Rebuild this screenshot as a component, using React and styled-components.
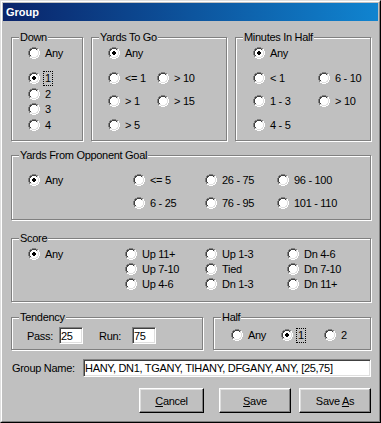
import React from 'react';
import styled, { createGlobalStyle } from 'styled-components';

const GlobalStyle = createGlobalStyle`
  html, body { margin: 0; padding: 0; background: #c0c0c0; }
  body { font-family: "Liberation Sans", Arial, sans-serif; font-size: 11px; color: #000; }
  * { box-sizing: border-box; }
`;

const Window = styled.div`
  width: 381px;
  height: 423px;
  border: 1px solid;
  border-color: #dfdfdf #000 #000 #dfdfdf;
  background: #c0c0c0;
`;

const Frame = styled.div`
  height: 100%;
  border: 1px solid;
  border-color: #fff #808080 #808080 #fff;
  padding: 1px;
  display: flex;
  flex-direction: column;
`;

const TitleBar = styled.div`
  flex: none;
  height: 18px;
  padding-left: 3px;
  display: flex;
  align-items: center;
  background: linear-gradient(to right, #0a246a, #1084d0);
  color: #fff;
  font-weight: bold;
  font-size: 11px;
`;

const Client = styled.div`
  flex: 1;
  padding: 10px 7px 0 8px;
  display: flex;
  flex-direction: column;
  letter-spacing: -0.3px;
`;

const Row = styled.div`
  display: grid;
  grid-template-columns: ${p => p.$cols};
  column-gap: ${p => p.$gap}px;
  margin-top: ${p => p.$mt || 0}px;
`;

const GroupBox = styled.fieldset`
  margin: 0;
  margin-top: ${p => p.$mt || 0}px;
  padding: 0;
  min-width: 0;
  height: ${p => p.$h}px;
  border: 1px solid #808080;
  box-shadow: 1px 1px 0 #fff, inset 1px 1px 0 #fff;
`;

const Legend = styled.legend`
  margin-left: 7px;
  padding: 0 1px;
  line-height: 13px;
  font-size: 11px;
  background: #c0c0c0;
`;

const Options = styled.div`
  display: grid;
  grid-template-columns: ${p => p.$cols};
  grid-template-rows: ${p => p.$rows};
  align-items: start;
  padding: ${p => p.$pad};
`;

const Option = styled.div`
  display: flex;
  align-items: center;
  height: 16px;
  white-space: nowrap;
`;

const OptionLabel = styled.span`
  margin-left: 3px;
  padding: 0 1px;
  line-height: 13px;
  border: 1px ${p => (p.$focused ? 'dotted #000' : 'solid transparent')};
`;

const RadioSvg = styled.svg`
  flex: none;
  display: block;
  shape-rendering: crispEdges;
`;

const Inline = styled.div`
  display: flex;
  align-items: center;
  padding: ${p => p.$pad};
`;

const FieldLabel = styled.span`
  flex: none;
  width: ${p => p.$w}px;
  padding-left: ${p => p.$pl || 0}px;
  margin-left: ${p => p.$ml || 0}px;
  white-space: nowrap;
`;

const TextBox = styled.input`
  flex: ${p => (p.$w ? 'none' : '1')};
  width: ${p => (p.$w ? `${p.$w}px` : 'auto')};
  min-width: 0;
  height: ${p => p.$h}px;
  margin: 0;
  padding: 0 1px;
  font: inherit;
  letter-spacing: inherit;
  color: #000;
  background: #fff;
  border: 1px solid;
  border-color: #808080 #fff #fff #808080;
  box-shadow: inset 1px 1px 0 #404040, inset -1px -1px 0 #dfdfdf;
  outline: none;
`;

const NameRow = styled.div`
  display: flex;
  align-items: center;
  margin-top: 9px;
`;

const ButtonRow = styled.div`
  display: flex;
  justify-content: flex-end;
  margin-top: 11px;
`;

const Button = styled.button`
  flex: none;
  width: ${p => p.$w}px;
  height: 25px;
  margin: 0 0 0 ${p => p.$ml || 0}px;
  padding: 0;
  font: inherit;
  letter-spacing: inherit;
  color: #000;
  background: #c0c0c0;
  border: 1px solid;
  border-color: #fff #000 #000 #fff;
  box-shadow: inset -1px -1px 0 #808080, inset 1px 1px 0 #dfdfdf;
`;

/* classic 12x12 radio bitmap */
const OUTER = [[4,5,6,7],[2,3,8,9],[1,10],[1,10],[0,11],[0,11],[0,11],[0,11],[1,10],[1,10],[2,3,8,9],[4,5,6,7]];
const INNER = [[],[4,5,6,7],[2,3,8,9],[2,9],[1,10],[1,10],[1,10],[1,10],[2,9],[2,3,8,9],[4,5,6,7],[]];
const FILL = [null,null,[4,7],[3,8],[2,9],[2,9],[2,9],[2,9],[3,8],[4,7],null,null];
const DOT = [null,null,null,null,[5,6],[4,7],[4,7],[5,6],null,null,null,null];

const Radio = ({ checked }) => {
  const px = [];
  OUTER.forEach((cols, y) => cols.forEach(x => px.push([x, y, x + y < 11 ? '#808080' : '#fff'])));
  INNER.forEach((cols, y) => cols.forEach(x => px.push([x, y, x + y < 11 ? '#404040' : '#dfdfdf'])));
  FILL.forEach((r, y) => {
    if (r) for (let x = r[0]; x <= r[1]; x++) px.push([x, y, '#fff']);
  });
  if (checked) DOT.forEach((r, y) => {
    if (r) for (let x = r[0]; x <= r[1]; x++) px.push([x, y, '#000']);
  });
  return (
    <RadioSvg width="12" height="12" viewBox="0 0 12 12">
      {px.map(([x, y, c], i) => <rect key={i} x={x} y={y} width="1" height="1" fill={c} />)}
    </RadioSvg>
  );
};

const RadioItem = ({ label, checked, focused }) => (
  <Option>
    <Radio checked={checked} />
    <OptionLabel $focused={focused}>{label}</OptionLabel>
  </Option>
);

const renderItems = items =>
  items.map((it, i) =>
    it ? <RadioItem key={i} label={it.l} checked={it.c} focused={it.f} /> : <span key={i} />
  );

const o = (l, c, f) => ({ l, c, f });

export default function App() {
  return (
    <>
      <GlobalStyle />
      <Window>
        <Frame>
          <TitleBar>Group</TitleBar>
          <Client>
            <Row $cols="72px 136px 1fr" $gap={8}>
              <GroupBox $h={110}>
                <Legend>Down</Legend>
                <Options $cols="auto" $rows="25px 16px 15px 16px 16px" $pad="1px 0 0 16px">
                  {renderItems([o('Any'), o('1', true, true), o('2'), o('3'), o('4')])}
                </Options>
              </GroupBox>
              <GroupBox $h={110}>
                <Legend>Yards To Go</Legend>
                <Options $cols="49px auto" $rows="25px 23px 24px 16px" $pad="1px 0 0 16px">
                  {renderItems([o('Any', true), null, o('<= 1'), o('> 10'), o('> 1'), o('> 15'), o('> 5'), null])}
                </Options>
              </GroupBox>
              <GroupBox $h={110}>
                <Legend>Minutes In Half</Legend>
                <Options $cols="65px auto" $rows="25px 23px 24px 16px" $pad="1px 0 0 17px">
                  {renderItems([o('Any', true), null, o('< 1'), o('6 - 10'), o('1 - 3'), o('> 10'), o('4 - 5'), null])}
                </Options>
              </GroupBox>
            </Row>

            <GroupBox $h={71} $mt={8}>
              <Legend>Yards From Opponent Goal</Legend>
              <Options $cols="105px 72px 72px auto" $rows="23px 16px" $pad="10px 0 0 16px">
                {renderItems([
                  o('Any', true), o('<= 5'), o('26 - 75'), o('96 - 100'),
                  null, o('6 - 25'), o('76 - 95'), o('101 - 110'),
                ])}
              </Options>
            </GroupBox>

            <GroupBox $h={70} $mt={12}>
              <Legend>Score</Legend>
              <Options $cols="97px 80px 82px auto" $rows="15px 15px 15px" $pad="1px 0 0 16px">
                {renderItems([
                  o('Any', true), o('Up 11+'), o('Up 1-3'), o('Dn 4-6'),
                  null, o('Up 7-10'), o('Tied'), o('Dn 7-10'),
                  null, o('Up 4-6'), o('Dn 1-3'), o('Dn 11+'),
                ])}
              </Options>
            </GroupBox>

            <Row $cols="192px 1fr" $gap={10} $mt={9}>
              <GroupBox $h={39}>
                <Legend>Tendency</Legend>
                <Inline $pad="3px 0 0 15px">
                  <FieldLabel $w={32}>Pass:</FieldLabel>
                  <TextBox $w={24} $h={17} readOnly value="25" />
                  <FieldLabel $w={33} $ml={16}>Run:</FieldLabel>
                  <TextBox $w={24} $h={17} readOnly value="75" />
                </Inline>
              </GroupBox>
              <GroupBox $h={39}>
                <Legend>Half</Legend>
                <Options $cols="50px 43px auto" $rows="16px" $pad="3px 0 0 17px">
                  {renderItems([o('Any'), o('1', true, true), o('2')])}
                </Options>
              </GroupBox>
            </Row>

            <NameRow>
              <FieldLabel $w={72} $pl={1}>Group Name:</FieldLabel>
              <TextBox $h={18} readOnly value="HANY, DN1, TGANY, TIHANY, DFGANY, ANY, [25,75]" />
            </NameRow>

            <ButtonRow>
              <Button $w={65}><u>C</u>ancel</Button>
              <Button $w={72} $ml={15}><u>S</u>ave</Button>
              <Button $w={72} $ml={8}>Save <u>A</u>s</Button>
            </ButtonRow>
          </Client>
        </Frame>
      </Window>
    </>
  );
}
